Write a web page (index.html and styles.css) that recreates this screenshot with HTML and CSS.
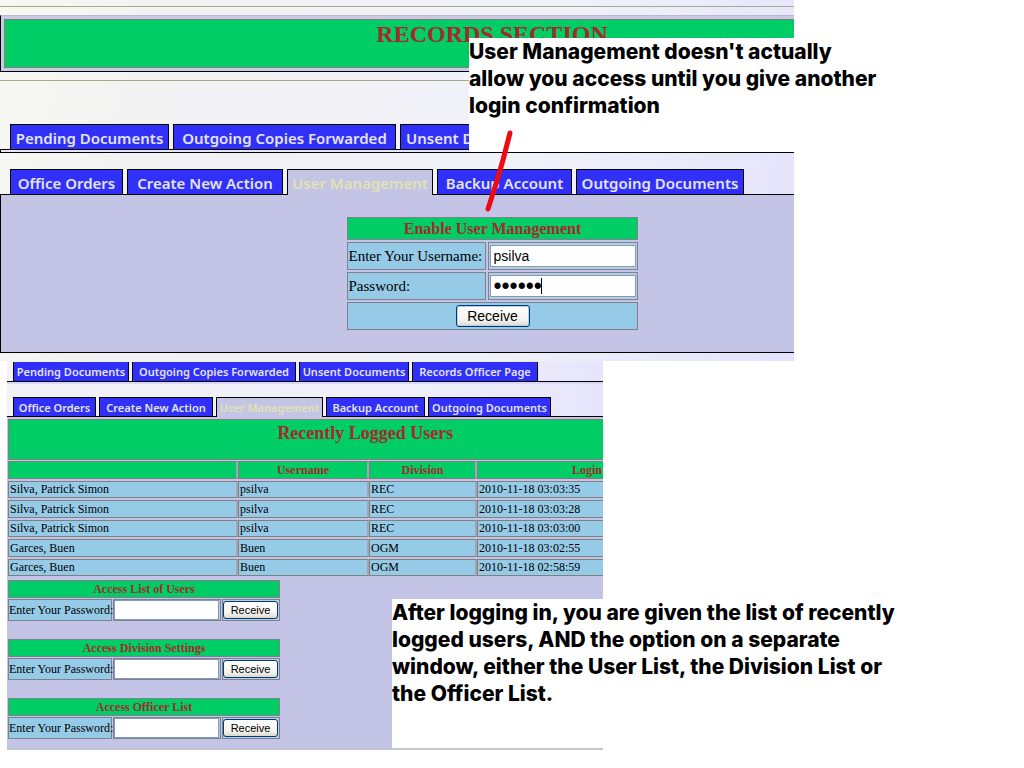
FILE: index.html
```html
<!DOCTYPE html>
<html lang="en">
<head>
<meta charset="utf-8">
<title>Records Section - User Management</title>
<link rel="stylesheet" href="styles.css">
</head>
<body>
<main class="guide">
  <section class="screen screen-login">
    <div class="wide">
      <header class="banner-area">
        <div class="banner-frame"><h1 class="banner">RECORDS SECTION</h1></div>
      </header>
      <nav class="tabs tabs-outer">
        <a class="tab" href="#">Pending Documents</a>
        <a class="tab" href="#">Outgoing Copies Forwarded</a>
        <a class="tab tab-start" href="#">Unsent Documents</a>
      </nav>
      <div class="strip"></div>
      <nav class="tabs tabs-inner">
        <a class="tab" href="#">Office Orders</a>
        <a class="tab" href="#">Create New Action</a>
        <a class="tab active" href="#">User Management</a>
        <a class="tab" href="#">Backup Account</a>
        <a class="tab" href="#">Outgoing Documents</a>
      </nav>
      <div class="panel">
        <form class="login">
          <h2 class="cell head">Enable User Management</h2>
          <label class="cell" for="user">Enter Your Username:</label>
          <div class="cell field"><input class="box" id="user" type="text" value="psilva"></div>
          <label class="cell" for="pass">Password:</label>
          <div class="cell field"><input class="box secret" id="pass" type="password" value="psilva"><span class="caret"></span></div>
          <div class="cell submit"><button class="btn" type="button">Receive</button></div>
        </form>
      </div>
    </div>
  </section>

  <section class="screen screen-users">
    <nav class="tabs small small-outer">
      <a class="tab" href="#">Pending Documents</a>
      <a class="tab" href="#">Outgoing Copies Forwarded</a>
      <a class="tab" href="#">Unsent Documents</a>
      <a class="tab" href="#">Records Officer Page</a>
    </nav>
    <div class="small-strip"></div>
    <nav class="tabs small small-inner">
      <a class="tab" href="#">Office Orders</a>
      <a class="tab" href="#">Create New Action</a>
      <a class="tab active" href="#">User Management</a>
      <a class="tab" href="#">Backup Account</a>
      <a class="tab" href="#">Outgoing Documents</a>
    </nav>
    <div class="small-panel">
      <h2 class="users-title"><span class="users-title-text">Recently Logged Users</span></h2>
      <table class="users">
        <colgroup><col class="c-name"><col class="c-user"><col class="c-div"><col></colgroup>
        <thead><tr><th></th><th>Username</th><th>Division</th><th class="login-col">Login</th></tr></thead>
        <tbody>
          <tr><td>Silva, Patrick Simon</td><td>psilva</td><td>REC</td><td>2010-11-18 03:03:35</td></tr>
          <tr><td>Silva, Patrick Simon</td><td>psilva</td><td>REC</td><td>2010-11-18 03:03:28</td></tr>
          <tr><td>Silva, Patrick Simon</td><td>psilva</td><td>REC</td><td>2010-11-18 03:03:00</td></tr>
          <tr><td>Garces, Buen</td><td>Buen</td><td>OGM</td><td>2010-11-18 03:02:55</td></tr>
          <tr><td>Garces, Buen</td><td>Buen</td><td>OGM</td><td>2010-11-18 02:58:59</td></tr>
        </tbody>
      </table>
      <div class="access-list">
        <form class="access">
          <h3 class="cell head">Access List of Users</h3>
          <label class="cell" for="p1">Enter Your Password:</label>
          <div class="cell field"><input class="box" id="p1" type="password"></div>
          <div class="cell field"><button class="btn" type="button">Receive</button></div>
        </form>
        <form class="access">
          <h3 class="cell head">Access Division Settings</h3>
          <label class="cell" for="p2">Enter Your Password:</label>
          <div class="cell field"><input class="box" id="p2" type="password"></div>
          <div class="cell field"><button class="btn" type="button">Receive</button></div>
        </form>
        <form class="access">
          <h3 class="cell head">Access Officer List</h3>
          <label class="cell" for="p3">Enter Your Password:</label>
          <div class="cell field"><input class="box" id="p3" type="password"></div>
          <div class="cell field"><button class="btn" type="button">Receive</button></div>
        </form>
      </div>
    </div>
  </section>

  <p class="note note-top">User Management doesn't actually<br>allow you access until you give another<br>login confirmation</p>
  <svg class="pointer" width="32" height="86" viewBox="0 0 32 86" aria-hidden="true"><path d="M27 5 L20 32 L13 56 L5 81" fill="none" stroke="#ee0a14" stroke-width="5" stroke-linecap="round" stroke-linejoin="round"/></svg>
  <p class="note note-bottom">After logging in, you are given the list of recently<br>logged users, AND the option on a separate<br>window, either the User List, the Division List or<br>the Officer List.</p>
</main>
</body>
</html>
```
FILE: styles.css
```css
* { box-sizing: border-box; }
body { margin: 0; background: #fff; font-family: "Liberation Serif", "Times New Roman", serif; }
h1, h2, h3, p { margin: 0; }
.guide { position: relative; min-height: 100vh; }
.screen { overflow: hidden; }

.screen-login {
  width: 77.5%;
  padding-bottom: 8px;
  background: linear-gradient(105deg, #f8f8f2 0%, #f2f2f3 20%, #f1f1fa 65%, #e4e2fb 100%);
}
.wide { width: 124%; }
.banner-area {
  margin-top: 6px;
  padding: 8px 0;
  border-top: 1px solid #a9a98c;
  border-bottom: 1px solid #a9a98c;
}
.banner-frame {
  padding: 3px;
  background: #c9c9e2;
  border: 1px solid #000;
  border-top-color: #b9b9d0;
}
.banner {
  height: 49px;
  border: 1px solid #808080;
  background: #00cd66;
  color: #a52a2a;
  font-size: 24px;
  line-height: 28px;
  text-align: center;
}

.tabs { display: grid; column-gap: 4px; padding-left: 10px; }
.tabs-outer { grid-template-columns: 159px 223px 163px; margin-top: 43px; }
.tabs-inner { grid-template-columns: 113px 156px 146px 135px 168px; margin-top: 16px; }
.tab {
  height: 25px;
  border: 1px solid #000;
  border-bottom: 0;
  background: #3030f8;
  color: #e4e4f4;
  font: 600 15px/26px "Noto Sans", sans-serif;
  text-align: center;
  text-decoration: none;
  white-space: nowrap;
}
.tab-start { padding-left: 5px; text-align: left; }
.tab.active {
  position: relative;
  height: 26px;
  margin-bottom: -1px;
  background: #c4c4e4;
  color: #e2e2b4;
}
.strip { height: 4px; border: 1px solid #000; background: #e4e4fa; }
.panel {
  height: 159px;
  padding-top: 20px;
  border: 1px solid #000;
  background: #c4c4e6;
}
.login {
  display: grid;
  grid-template-columns: 139px 150px;
  grid-template-rows: 23px 28px 28px 28px;
  gap: 2px;
  width: 291px;
  margin: 2px auto 0;
}
.cell {
  border: 1px solid #808090;
  background: #96cbe8;
  font-size: 15px;
  line-height: 26px;
  padding-left: 1px;
  white-space: nowrap;
}
.cell.head {
  grid-column: 1 / -1;
  background: #00cd66;
  color: #a52a2a;
  font-size: 16px;
  font-weight: bold;
  line-height: 22px;
  text-align: center;
}
.field { position: relative; display: flex; align-items: center; padding: 1px; background: #b4cce4; }
.submit { grid-column: 1 / -1; display: flex; align-items: center; justify-content: center; }
.box {
  width: 100%;
  height: 22px;
  padding: 0 3px;
  border: 1px solid #7f9db9;
  border-radius: 0;
  background: #fff;
  color: #000;
  font: 14px "Liberation Sans", Arial, sans-serif;
}
.secret { font-size: 23px; }
.caret { position: absolute; left: 52px; top: 5px; width: 1px; height: 16px; background: #000; }
.btn {
  width: 74px;
  height: 22px;
  padding: 0;
  border: 1px solid #003c74;
  border-radius: 3px;
  background: linear-gradient(#fff, #f4f3ee 70%, #dcd8cc);
  box-shadow: inset 0 0 0 1px #b4ccf4;
  color: #000;
  font: 14px/18px "Liberation Sans", Arial, sans-serif;
}

.screen-users {
  width: 58.2%;
  margin-left: 7px;
  border-bottom: 2px solid #c4c4cc;
  background: linear-gradient(100deg, #f2f2f6, #f0effb 60%, #e4e2fb);
}
.small { column-gap: 3px; padding-left: 6px; }
.small .tab { height: 19px; font-size: 11px; line-height: 20px; }
.small .tab.active { height: 20px; }
.small-outer { grid-template-columns: 116px 164px 110px 126px; padding-top: 1px; }
.small-outer .tab { border-top: 0; }
.small-inner { grid-template-columns: 83px 114px 107px 99px 123px; margin-top: 13px; }
.small-strip { height: 3px; border-top: 1px solid #000; background: #d8d8f0; }
.small-panel { border-top: 1px solid #000; background: #c4c4e6; padding: 2px 0 9px 1px; }
.users-title {
  height: 41px;
  border: 1px solid #808080;
  border-right: 0;
  background: #00cd66;
  color: #a52a2a;
  font-size: 18px;
  line-height: 26px;
}
.users-title-text { display: block; width: 120%; text-align: center; }
.users { width: 100%; margin-top: -1px; table-layout: fixed; border-collapse: separate; border-spacing: 0 2px; }
.c-name { width: 230px; }
.c-user { width: 131px; }
.c-div { width: 108px; }
.users td, .users th {
  height: 17px;
  padding: 0 1px;
  border: 1px solid #808080;
  border-right: 2px solid #a4a4b4;
  background: #96cbe8;
  font-size: 12px;
  line-height: 15px;
  text-align: left;
  white-space: nowrap;
}
.users th { height: 18px; background: #00cd66; color: #a52a2a; text-align: center; }
.users .login-col { text-align: right; }
.users td:last-child, .users th:last-child { border-right: 0; }
.users tr:nth-child(even) td { height: 18px; line-height: 16px; }
.access-list { display: flex; flex-direction: column; gap: 18px; margin-top: 2px; }
.access {
  display: grid;
  grid-template-columns: 104px 108px 58px;
  grid-template-rows: 18px 22px;
  column-gap: 1px;
  row-gap: 1px;
}
.access .cell { padding-left: 0; font-size: 12px; line-height: 20px; }
.access .cell.head { line-height: 16px; width: 272px; }
.access .box { height: 20px; }
.access .btn { width: 100%; height: 18px; font-size: 11px; line-height: 14px; box-shadow: none; }

.note {
  position: absolute;
  background: #fff;
  color: #000;
  font: 800 21px/27px Inter, "Liberation Sans", sans-serif;
  white-space: nowrap;
}
.note-top { left: 469px; top: 38px; padding-bottom: 33px; }
.note-bottom { left: 392px; top: 599px; padding-bottom: 41px; }
.pointer { position: absolute; left: 483px; top: 128px; }
```
